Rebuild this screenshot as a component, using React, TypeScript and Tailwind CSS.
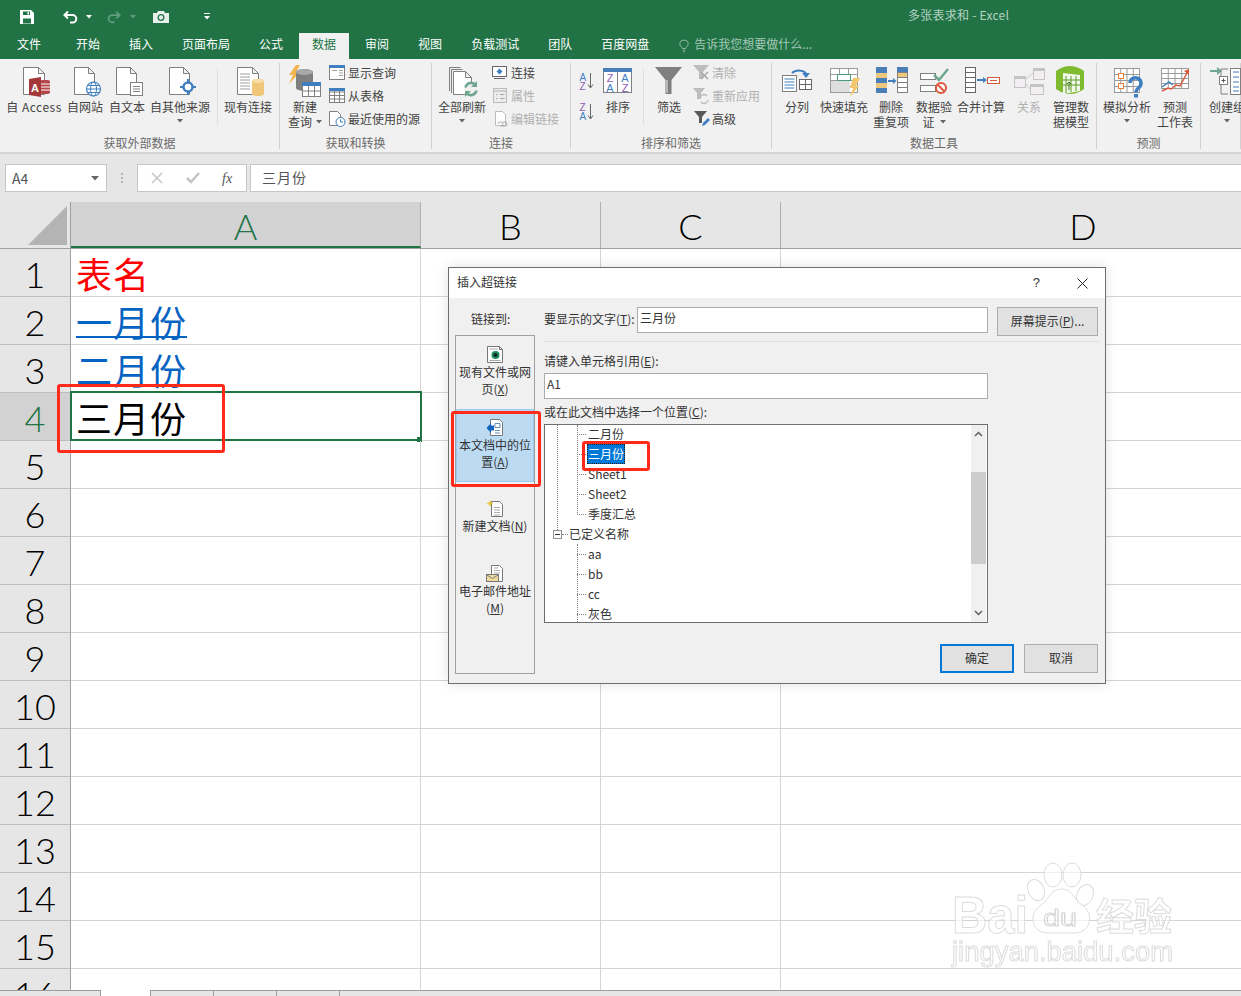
import React from "react";

const G = "#7f7f7f";
const BLUE = "#3f7fbf";
const GREEN = "#6fa68f";

function Table({ x, y, w, h, cols, rows, stroke = G, fill = "#fff" }: { x: number; y: number; w: number; h: number; cols: number; rows: number; stroke?: string; fill?: string }) {
  let d = "";
  for (let i = 1; i < cols; i++) d += `M${x + (w * i) / cols} ${y}v${h}`;
  for (let i = 1; i < rows; i++) d += `M${x} ${y + (h * i) / rows}h${w}`;
  return (
    <g>
      <rect x={x} y={y} width={w} height={h} fill={fill} stroke={stroke} />
      <path d={d} stroke={stroke} fill="none" />
    </g>
  );
}

function Doc({ x, y = 67.5, w = 20, h = 27, stroke = G }: { x: number; y?: number; w?: number; h?: number; stroke?: string }) {
  return <path d={`M${x} ${y}h${w - 6}l6 6v${h - 6}h-${w}zM${x + w - 6} ${y}v6h6`} fill="#fff" stroke={stroke} />;
}

function Caret({ className = "" }: { className?: string }) {
  return (
    <svg className={className} width="6" height="4" viewBox="0 0 6 4">
      <path d="M0 0h6L3 3.5z" fill="#666" />
    </svg>
  );
}

function Big({ w, lines, caret, dim, children }: { w: string; lines: React.ReactNode[]; caret?: boolean; dim?: boolean; children: React.ReactNode }) {
  return (
    <div className={`${w} shrink-0 flex flex-col items-center pt-[2px] leading-[15px] ${dim ? "text-[#b0b0b0]" : "text-[#444]"}`}>
      <div className="w-full h-[35px] -mb-px">{children}</div>
      {lines.map((l, i) => (
        <div key={i} className="whitespace-nowrap flex items-center">{l}</div>
      ))}
      {caret && <Caret className="mt-[5px]" />}
    </div>
  );
}

function Small({ label, dim, children }: { label: string; dim?: boolean; children: React.ReactNode }) {
  return (
    <div className={`h-[23px] flex items-center whitespace-nowrap ${dim ? "text-[#b0b0b0]" : "text-[#444]"}`}>
      <svg className="shrink-0" width="19" height="23" viewBox="0 0 19 23">{children}</svg>
      <span>{label}</span>
    </div>
  );
}

function Group({ w, label, children }: { w: string; label?: string; children: React.ReactNode }) {
  return (
    <div className={`${w} shrink-0 h-[86px] border-r border-[#d0d0d0] flex flex-col`}>
      <div className="h-[72px] flex">{children}</div>
      <div className="h-[14px] leading-[16px] text-center text-[#6a6a6a] whitespace-nowrap">{label}</div>
    </div>
  );
}

function Sep() {
  return <div className="w-px h-[55px] mt-[6px] bg-[#dcdcdc] shrink-0" />;
}

const SvgBig = ({ vb, children }: { vb: string; children: React.ReactNode }) => (
  <svg className="block w-full h-[35px] overflow-visible" viewBox={vb}>{children}</svg>
);

function TitleBar() {
  return (
    <div className="h-[33px] bg-[#217346] flex items-center relative">
      <svg className="ml-[20px]" width="14" height="14" viewBox="0 0 14 14">
        <path d="M0 0h11l3 3v11H0z" fill="#fff" />
        <path d="M3 1.5h7v3.5H3zM3 8.5h8v5H3z" fill="#217346" />
        <path d="M7.5 2h1.5v2.5H7.5z" fill="#fff" />
      </svg>
      <svg className="ml-[29px]" width="15" height="14" viewBox="0 0 15 14" fill="none" stroke="#fff" strokeWidth="2">
        <path d="M5 1.5L1.5 5 5 8.5M2 5h7.5a3.8 3.8 0 0 1 0 7.6H7" />
      </svg>
      <svg className="ml-[8px]" width="6" height="4" viewBox="0 0 6 4"><path d="M0 0h6L3 3.5z" fill="#fff" /></svg>
      <svg className="ml-[15px]" width="14" height="14" viewBox="0 0 15 14" fill="none" stroke="#5f9c7f" strokeWidth="2">
        <path d="M10 1.5L13.5 5 10 8.5M13 5H5.5a3.8 3.8 0 0 0 0 7.6H8" />
      </svg>
      <svg className="ml-[9px]" width="6" height="4" viewBox="0 0 6 4"><path d="M0 0h6L3 3.5z" fill="#5f9c7f" /></svg>
      <svg className="ml-[17px]" width="16" height="12" viewBox="0 0 16 12">
        <path d="M0 2h4l1-2h6l1 2h4v10H0z" fill="#e8f0ec" />
        <circle cx="8" cy="6.5" r="2.8" fill="none" stroke="#217346" strokeWidth="1.3" />
      </svg>
      <svg className="ml-[35px]" width="6" height="7" viewBox="0 0 6 7">
        <path d="M0 0h6v1H0zM0 3h6L3 6.5z" fill="#fff" />
      </svg>
      <div className="absolute left-[908px] top-[7px] leading-[15px] tracking-[0.25px] text-[#b5d2c3] whitespace-nowrap">多张表求和 - Excel</div>
    </div>
  );
}

function Tabs() {
  const names = ["开始", "插入", "页面布局", "公式"];
  const after = ["审阅", "视图", "负载测试", "团队", "百度网盘"];
  return (
    <div className="h-[26px] bg-[#217346] flex pl-[17px] gap-[29px] text-white leading-[22px] whitespace-nowrap">
      <div className="mr-[6px]">文件</div>
      {names.map((n) => <div key={n}>{n}</div>)}
      <div className="-mx-[13px] px-[13px] bg-[#f1f1f1] text-[#217346]">数据</div>
      {after.map((n) => <div key={n}>{n}</div>)}
      <div className="flex items-center h-[22px] -ml-[1px] text-[#a5c8b6]">
        <svg className="mr-[5px] mt-[3px] ml-[2px]" width="10" height="14" viewBox="0 0 12 15" fill="none" stroke="#a5c8b6" strokeWidth="1">
          <path d="M4 10.5C3.5 8.500 1 7.500 1 5a5 4.500 0 0 1 10 0c0 2.500-2.500 3.500-3 5.500zM4.500 12.500h3M5 14.500h2" />
        </svg>
        告诉我您想要做什么...
      </div>
    </div>
  );
}

function Ribbon() {
  return (
    <div className="h-[95px] bg-[#f1f1f1] border-b-2 border-[#d4d4d4] pt-[4px] flex overflow-hidden">
      <Group w="w-[280px]" label="获取外部数据">
        <div className="w-[3px] shrink-0" />
        <Big w="w-[62px]" lines={[<span className="tracking-[0.5px]">自 Access</span>]}>
          <SvgBig vb="3 65 62 35">
            <Doc x={23.5} w={21} h={27} />
            <rect x="40" y="80" width="10" height="14" rx="2" fill="#b5474a" />
            <path d="M41 84h9M41 87h9M41 90h9" stroke="#fff" />
            <path d="M29 79l12-2v20l-12-2z" fill="#a4373a" />
            <text x="31" y="92" fontSize="11" fontWeight="700" fill="#fff" fontFamily="Liberation Sans">A</text>
          </SvgBig>
        </Big>
        <Big w="w-[40px]" lines={["自网站"]}>
          <SvgBig vb="65 65 40 35">
            <Doc x={74.5} w={20} h={27} />
            <circle cx="93.500" cy="89" r="7" fill="#fff" stroke={BLUE} strokeWidth="1.2" />
            <ellipse cx="93.500" cy="89" rx="3" ry="7" fill="none" stroke={BLUE} />
            <path d="M86.500 89h14M87.500 85.500h12M87.500 92.500h12" stroke={BLUE} />
          </SvgBig>
        </Big>
        <Big w="w-[44px]" lines={["自文本"]}>
          <SvgBig vb="105 65 44 35">
            <Doc x={116.5} w={20} h={27} />
            <rect x="130.500" y="82.500" width="12" height="13" fill="#fff" stroke={G} />
            <path d="M133 86.500h7M133 89h7M133 91.500h7" stroke={G} />
          </SvgBig>
        </Big>
        <Big w="w-[62px]" lines={["自其他来源"]} caret>
          <SvgBig vb="149 65 62 35">
            <Doc x={169.5} w={20} h={27} />
            <circle cx="188" cy="87" r="4.500" fill="#fff" stroke={BLUE} strokeWidth="2.500" />
            <path d="M188 79v3M188 92v3M180 87h3M193 87h3" stroke={BLUE} strokeWidth="2" />
          </SvgBig>
        </Big>
        <div className="w-[6px] shrink-0" />
        <Sep />
        <div className="w-[4px] shrink-0" />
        <Big w="w-[52px]" lines={["现有连接"]}>
          <SvgBig vb="222 65 52 35">
            <Doc x={237.5} w={21} h={27} />
            <path d="M240 74h10M240 77h10M240 80h10M240 83h10M240 86h10M240 89h10" stroke="#a0a0a0" />
            <path d="M252 81a6 2 0 0 1 12 0v13a6 2 0 0 1-12 0z" fill="#f0c77a" />
            <ellipse cx="258" cy="81" rx="6" ry="2" fill="#f7dca6" />
          </SvgBig>
        </Big>
      </Group>

      <Group w="w-[152px]" label="获取和转换">
        <div className="w-[4px] shrink-0" />
        <Big w="w-[42px]" lines={["新建", <>查询<Caret className="ml-[4px]" /></>]}>
          <SvgBig vb="284 65 42 35">
            <path d="M296 65l-7 10h4l-4 9 11-12h-4l4-7z" fill="#f3b44f" />
            <path d="M296 72a8.500 3 0 0 1 17 0v16a8.500 3 0 0 1-17 0z" fill="#7f7f7f" />
            <ellipse cx="304.500" cy="72" rx="8.500" ry="3" fill="#a8a8a8" />
            <Table x={302.5} y={85.5} w={18} h={11} cols={3} rows={2} />
            <rect x="302" y="82" width="19" height="4" fill={BLUE} />
          </SvgBig>
        </Big>
        <div className="w-[3px] shrink-0" />
        <div className="-mt-[2px]">
          <Small label="显示查询">
            <rect x="0.500" y="4.500" width="15" height="14" fill="#fff" stroke={G} />
            <rect x="0" y="4" width="16" height="3" fill={BLUE} />
            <path d="M10 9.500h4M10 12h4M10 14.500h4M3 9.500h5" stroke="#a0a0a0" />
          </Small>
          <Small label="从表格">
            <Table x={0.5} y={4.5} w={15} h={14} cols={3} rows={4} />
            <rect x="0" y="4" width="16" height="3" fill={BLUE} />
          </Small>
          <Small label="最近使用的源">
            <path d="M0.500 4.500h8l3 3v11h-11z" fill="#fff" stroke={G} />
            <circle cx="11.500" cy="15" r="4.500" fill="#fff" stroke={BLUE} />
            <path d="M11.500 12.500V15h2.500" stroke={BLUE} fill="none" />
          </Small>
        </div>
      </Group>

      <Group w="w-[139px]" label="连接">
        <div className="w-[4px] shrink-0" />
        <Big w="w-[52px]" lines={["全部刷新"]} caret>
          <SvgBig vb="436 65 52 35">
            <path d="M449.500 91V67.500h11M451.500 93V69.500h11" fill="none" stroke={G} />
            <Doc x={453.5} y={71.5} w={18} h={23} />
            <circle cx="471" cy="89" r="7" fill="#f1f1f1" />
            <path d="M465.500 87.500a5.700 5.700 0 0 1 10-2.500M476.500 90.500a5.700 5.700 0 0 1-10 2.500" fill="none" stroke={GREEN} strokeWidth="2.500" />
            <path d="M477 81v6h-6zM465 97v-6h6z" fill={GREEN} />
          </SvgBig>
        </Big>
        <div className="w-[4px] shrink-0" />
        <div className="-mt-[2px]">
          <Small label="连接">
            <rect x="0.500" y="5.500" width="14" height="10" fill="#fff" stroke="#666" />
            <path d="M7.500 7.500l3 3-3 3-3-3z" fill={BLUE} />
            <path d="M2 17.500h11" stroke="#666" />
          </Small>
          <Small label="属性" dim>
            <rect x="1.500" y="4.500" width="13" height="14" fill="#ececec" stroke="#bbb" />
            <path d="M2 7h12" stroke="#ccc" strokeWidth="2" />
            <path d="M4 10.500h1.500M4 14.500h1.500M8 10.500h4.500M8 14.500h4.500" stroke="#aaa" />
          </Small>
          <Small label="编辑链接" dim>
            <path d="M3.500 4.500h7l3 3v11h-10z" fill="#fff" stroke="#bbb" />
            <path d="M6 17a2 2 0 0 1 2-2h1a2 2 0 0 1 0 4H8M10 19h3a2 2 0 0 0 0-4h-2" fill="none" stroke="#aaa" />
          </Small>
        </div>
      </Group>

      <Group w="w-[201px]" label="排序和筛选">
        <div className="w-[4px] shrink-0" />
        <svg className="shrink-0" width="25" height="72" viewBox="575 63 25 72" fontFamily="Liberation Sans" fontSize="10" fontWeight="400">
          <text x="579.500" y="81" fill={BLUE}>A</text>
          <text x="579.500" y="90" fill="#8e5bb5">Z</text>
          <path d="M590.500 73v14M588 84.500l2.500 3.500 2.500-3.500" fill="none" stroke="#666" />
          <text x="579.500" y="111" fill="#8e5bb5">Z</text>
          <text x="579.500" y="120" fill={BLUE}>A</text>
          <path d="M590.500 104v14M588 115.500l2.500 3.500 2.500-3.500" fill="none" stroke="#666" />
        </svg>
        <Big w="w-[36px]" lines={["排序"]}>
          <SvgBig vb="600 65 36 35">
            <rect x="603.500" y="68.500" width="28" height="24" fill="#fff" stroke={G} />
            <rect x="603" y="68" width="29" height="4" fill="#4a7eb8" />
            <path d="M617.500 72v20" stroke={G} />
            <g fontFamily="Liberation Sans" fontSize="11" textAnchor="middle">
              <text x="610" y="82" fill="#8e5bb5">Z</text>
              <text x="610" y="92" fill={BLUE}>A</text>
              <text x="625" y="82" fill={BLUE}>A</text>
              <text x="625" y="92" fill="#8e5bb5">Z</text>
            </g>
          </SvgBig>
        </Big>
        <div className="w-[7px] shrink-0" />
        <Sep />
        <div className="w-[7px] shrink-0" />
        <Big w="w-[36px]" lines={["筛选"]}>
          <SvgBig vb="651 65 36 35">
            <path d="M655 67h27l-10.500 13v14h-6V80z" fill="#7f7f7f" />
            <path d="M667 80v13" stroke="#c8c8c8" strokeWidth="1.500" />
          </SvgBig>
        </Big>
        <div className="w-[6px] shrink-0" />
        <div className="-mt-[2px]">
          <Small label="清除" dim>
            <path d="M0 4h16l-6 7v7H6v-7z" fill="#bdbdbd" />
            <path d="M8 11l7 7M15 11l-7 7" stroke="#a8a8a8" strokeWidth="1.500" />
          </Small>
          <Small label="重新应用" dim>
            <path d="M0 4h12l-4 5v6H4V9z" fill="#bdbdbd" />
            <path d="M7 14a4 4 0 0 1 7-2M15 16a4 4 0 0 1-7 2" fill="none" stroke="#bbb" strokeWidth="1.500" />
          </Small>
          <Small label="高级">
            <path d="M1 4h13l-5 6v6H6v-6z" fill="#595959" />
            <path d="M9 19l1-3 5-5 2 2-5 5z" fill={BLUE} />
          </Small>
        </div>
      </Group>

      <Group w="w-[325px]" label="数据工具">
        <div className="w-[3px] shrink-0" />
        <Big w="w-[44px]" lines={["分列"]}>
          <SvgBig vb="775 65 44 35">
            <rect x="782.500" y="75.500" width="14" height="16" fill="#fff" stroke={G} />
            <path d="M784.500 79h10M784.500 82h10M784.500 85h10M784.500 88h10" stroke={BLUE} />
            <Table x={799.5} y={79.5} w={12} h={10} cols={2} rows={2} stroke="#666" />
            <path d="M792 73a9 7 0 0 1 14 0" fill="none" stroke={BLUE} strokeWidth="2" />
            <path d="M802 73h8l-4 5z" fill={BLUE} />
          </SvgBig>
        </Big>
        <Big w="w-[50px]" lines={["快速填充"]}>
          <SvgBig vb="819 65 50 35">
            <Table x={830.5} y={68.5} w={27} h={24} cols={3} rows={4} stroke="#9a9a9a" />
            <rect x="831" y="81" width="19" height="11" fill="#dedede" />
            <rect x="837.500" y="74.500" width="13" height="6" fill="#fff" stroke="#4d9a7a" />
            <path d="M853 78h7l-4 8h3l-9 11 3-9h-3z" fill="#f3c66d" />
          </SvgBig>
        </Big>
        <Big w="w-[44px]" lines={["删除", "重复项"]}>
          <SvgBig vb="869 65 44 35">
            <rect x="876" y="67" width="11" height="26" fill="#4a7eb8" />
            <path d="M876 73h11v5h-11zM876 83h11v5h-11z" fill="#edc77c" />
            <path d="M888 81h6" stroke={BLUE} strokeWidth="2" />
            <path d="M893 78l3.500 3-3.500 3z" fill={BLUE} />
            <Table x={897.5} y={67.5} w={10} h={25} cols={1} rows={5} />
            <rect x="897" y="67" width="11" height="5" fill="#4a7eb8" />
            <rect x="898" y="73" width="9" height="4" fill="#edc77c" />
          </SvgBig>
        </Big>
        <Big w="w-[42px]" lines={["数据验", <>证<Caret className="ml-[5px]" /></>]}>
          <SvgBig vb="913 65 42 35">
            <rect x="920.500" y="73.500" width="15" height="6" fill="#fff" stroke={G} />
            <rect x="920.500" y="85.500" width="15" height="6" fill="#fff" stroke={G} />
            <path d="M934 75l5 5 9-11" fill="none" stroke={GREEN} strokeWidth="2.500" />
            <circle cx="941" cy="88" r="5" fill="#fff" stroke="#d9573b" strokeWidth="2" />
            <path d="M937.500 84.500l7 7" stroke="#d9573b" strokeWidth="2" />
          </SvgBig>
        </Big>
        <Big w="w-[52px]" lines={["合并计算"]}>
          <SvgBig vb="955 65 52 35">
            <Table x={965.5} y={67.5} w={10} h={25} cols={1} rows={5} stroke="#666" />
            <path d="M977 80h7" stroke={BLUE} strokeWidth="2" />
            <path d="M983 77l4 3-4 3z" fill={BLUE} />
            <rect x="987.500" y="77.500" width="12" height="6" fill="#fff" stroke="#d9573b" />
            <path d="M990 80.500h7" stroke="#d9573b" />
          </SvgBig>
        </Big>
        <Big w="w-[44px]" lines={["关系"]} dim>
          <SvgBig vb="1007 65 44 35">
            <path d="M1025 80l8-7M1025 83l5 6" stroke="#c8c8c8" />
            <rect x="1033.500" y="68.500" width="11" height="11" fill="#f2eef2" stroke="#c4c4c4" />
            <rect x="1033" y="68" width="12" height="3" fill="#c4c4c4" />
            <rect x="1014.500" y="76.500" width="11" height="11" fill="#f2eef2" stroke="#c4c4c4" />
            <rect x="1014" y="76" width="12" height="3" fill="#c4c4c4" />
            <rect x="1030.500" y="84.500" width="13" height="10" fill="#f2eef2" stroke="#c4c4c4" />
            <rect x="1030" y="84" width="14" height="3" fill="#c4c4c4" />
          </SvgBig>
        </Big>
        <Big w="w-[40px]" lines={["管理数", "据模型"]}>
          <SvgBig vb="1051 65 40 35">
            <path d="M1056 71q14-10 28 0v18q-14 10-28 0z" fill="#7fba2f" />
            <path d="M1063 73l17 2v16l-17 3z" fill="#fff" opacity="0.9" />
            <path d="M1066 76v17M1071 76v16M1076 76v15M1063 80h17M1063 85h17" stroke="#5d9a22" />
            <path d="M1069 90v-8M1067 84l2-2 2 2" stroke="#3f7a18" fill="none" />
          </SvgBig>
        </Big>
      </Group>

      <Group w="w-[104px]" label="预测">
        <div className="w-[4px] shrink-0" />
        <Big w="w-[52px]" lines={["模拟分析"]} caret>
          <SvgBig vb="1101 65 52 35">
            <Table x={1114.5} y={68.5} w={25} h={24} cols={4} rows={4} stroke="#9a9a9a" />
            <rect x="1118.500" y="73.500" width="5" height="5" fill="#fff" stroke="#ed7d31" />
            <rect x="1118.500" y="83.500" width="5" height="5" fill="#fff" stroke="#ed7d31" />
            <path d="M1130 83a5.500 5.500 0 1 1 9 4.500c-2.500 2-3 3-3 5" fill="none" stroke={BLUE} strokeWidth="3.500" />
            <rect x="1134" y="94" width="4" height="3.500" fill={BLUE} />
          </SvgBig>
        </Big>
        <Big w="w-[44px]" lines={["预测", "工作表"]}>
          <SvgBig vb="1153 65 44 35">
            <Table x={1161.5} y={68.5} w={27} h={20} cols={4} rows={4} stroke="#9a9a9a" />
            <path d="M1162 91l6-3 3 1 5-4 4 1 7-13" fill="none" stroke="#d9573b" strokeWidth="1.500" />
            <path d="M1184 71l5-2v6z" fill="#d9573b" />
            <path d="M1162 87l7-5 4 3" fill="none" stroke={BLUE} strokeWidth="1.500" />
          </SvgBig>
        </Big>
      </Group>

      <Group w="w-[40px]">
        <Big w="w-[52px]" lines={["创建组"]} caret>
          <SvgBig vb="1201 65 52 35">
            <path d="M1210 71h9" stroke={GREEN} strokeWidth="2" />
            <path d="M1217 67l5 4-5 4z" fill={GREEN} />
            <path d="M1228 69h-7v25h7" fill="none" stroke={G} />
            <rect x="1219.500" y="76.500" width="8" height="8" fill="#fff" stroke={G} />
            <path d="M1221.500 80.500h4M1223.500 78.500v4" stroke="#555" />
            <rect x="1230.500" y="68.500" width="10" height="26" fill="#fff" stroke={G} />
            <path d="M1233 72h6M1233 77h6M1233 82h6M1233 87h6M1233 91h6" stroke={BLUE} />
          </SvgBig>
        </Big>
      </Group>
    </div>
  );
}

function FormulaBar() {
  return (
    <div className="h-[48px] bg-[#e6e6e6] flex pt-[10px] pl-[5px]">
      <div className="w-[102px] h-[28px] bg-white border border-[#c6c6c6] flex items-center justify-between pl-[6px] pr-[7px] text-[14px] text-[#555]">
        A4
        <svg width="8" height="5" viewBox="0 0 8 5"><path d="M0 0h8L4 4.500z" fill="#666" /></svg>
      </div>
      <div className="w-[30px] h-[28px] flex flex-col items-center justify-center gap-[2px] shrink-0">
        <i className="block w-[2px] h-[2px] bg-[#b5b5b5]" />
        <i className="block w-[2px] h-[2px] bg-[#b5b5b5]" />
        <i className="block w-[2px] h-[2px] bg-[#b5b5b5]" />
      </div>
      <div className="w-[110px] h-[28px] bg-white border border-[#c6c6c6] flex items-center shrink-0">
        <svg className="ml-[13px]" width="12" height="12" viewBox="0 0 12 12"><path d="M1 1l10 10M11 1L1 11" stroke="#c4c4c4" strokeWidth="1.500" /></svg>
        <svg className="ml-[23px]" width="14" height="12" viewBox="0 0 14 12"><path d="M1 6l4 4 8-9" fill="none" stroke="#c4c4c4" strokeWidth="2.500" /></svg>
        <span className="ml-[22px] text-[#555] text-[14px] italic font-['Liberation_Serif',serif]">fx</span>
      </div>
      <div className="ml-[3px] flex-1 h-[28px] bg-white border border-[#c6c6c6] border-r-0 flex items-center pl-[11px] pb-[2px] text-[14px] tracking-[1px] text-[#555]">三月份</div>
    </div>
  );
}

const LAT = "font-['Lato','Liberation_Sans',sans-serif] font-light text-[36px] leading-none";

function Sheet() {
  const rows = Array.from({ length: 16 }, (_, i) => i + 1);
  return (
    <div className="h-[788px] overflow-hidden">
      <div className="h-[47px] flex bg-[#e6e6e6] border-b border-[#a0a0a0] text-black">
        <div className="w-[71px] shrink-0 border-r border-[#a0a0a0] relative">
          <svg className="absolute left-[27px] top-[3px]" width="41" height="41" viewBox="0 0 41 41"><path d="M1 40L40 1v39z" fill="#b4b4b4" /></svg>
        </div>
        <div className={`w-[350px] shrink-0 bg-[#d2d2d2] border-r border-[#b0b0b0] border-b-2 border-b-[#217346] text-[#217346] text-center pt-[6px] ${LAT}`}>A</div>
        <div className={`w-[180px] shrink-0 border-r border-[#b0b0b0] text-center pt-[6px] ${LAT}`}>B</div>
        <div className={`w-[180px] shrink-0 border-r border-[#b0b0b0] text-center pt-[6px] ${LAT}`}>C</div>
        <div className={`w-[604px] shrink-0 text-center pt-[6px] ${LAT}`}>D</div>
      </div>
      {rows.map((r) => (
        <div key={r} className="h-[48px] flex">
          <div className={`w-[71px] shrink-0 border-r border-b border-r-[#a0a0a0] border-b-[#bdbdbd] text-center pt-[7px] ${LAT} ${r === 4 ? "bg-[#d2d2d2] text-[#217346]" : "bg-[#e6e6e6] text-black"}`}>{r}</div>
          <div className="w-[350px] shrink-0 relative border-r border-b border-[#d4d4d4] flex items-center pl-[5px] text-[36px] leading-none tracking-[1px] whitespace-nowrap">
            {r === 1 && <span className="text-[#ff0000]">表名</span>}
            {r === 2 && <span className="text-[#0563c1] underline decoration-2 underline-offset-[-1px]">一月份</span>}
            {r === 3 && <span className="text-[#0563c1] underline decoration-2 underline-offset-[-1px]">二月份</span>}
            {r === 4 && <span className="text-black">三月份</span>}
            {r === 4 && (
              <div className="absolute -left-[1px] -top-[2px] w-[352px] h-[50px] border-2 border-[#217346]">
                <div className="absolute -right-[2px] -bottom-[3px] w-[5px] h-[5px] bg-[#217346]" />
              </div>
            )}
          </div>
          <div className="w-[180px] shrink-0 border-r border-b border-[#d4d4d4]" />
          <div className="w-[180px] shrink-0 border-r border-b border-[#d4d4d4]" />
          <div className="flex-1 border-b border-[#d4d4d4]" />
        </div>
      ))}
    </div>
  );
}

function SheetTabs() {
  return (
    <div className="h-[6px] flex">
      <div className="w-[101px] bg-[#e6e6e6] border-t border-r border-[#9c9c9c]" />
      <div className="w-[49px] bg-white" />
      <div className="flex-1 bg-[#e6e6e6] border-t border-l border-[#9c9c9c] flex">
        <div className="w-[63px] border-r border-[#9c9c9c]" />
        <div className="w-[63px] border-r border-[#9c9c9c]" />
        <div className="w-[63px] border-r border-[#9c9c9c]" />
      </div>
    </div>
  );
}

function DlgItem({ lines, selected, children }: { lines: React.ReactNode[]; selected?: boolean; children: React.ReactNode }) {
  return (
    <div className={`h-[73px] flex flex-col items-center justify-center pb-[2px] leading-[17px] text-[#333] border ${selected ? "bg-[#bcdbf3] border-[#99c9ef]" : "border-transparent"}`}>
      <svg width="18" height="17" viewBox="0 0 18 17" className="-mt-px">{children}</svg>
      {lines.map((l, i) => <div key={i} className="whitespace-nowrap">{l}</div>)}
    </div>
  );
}

function TreeRow({ children, selected }: { children: React.ReactNode; selected?: boolean }) {
  return (
    <div className="h-[20px] flex items-center pl-[32px] text-[#333]">
      <div className="w-[9px] border-t border-dotted border-[#808080]" />
      {selected ? (
        <span className="ml-px px-px h-[20px] leading-[20px] bg-[#0078d7] text-white outline outline-dotted outline-1 -outline-offset-1 outline-[#222]">{children}</span>
      ) : (
        <span className="ml-[2px]">{children}</span>
      )}
    </div>
  );
}

function Dialog() {
  return (
    <div className="absolute left-[448px] top-[267px] w-[658px] h-[417px] bg-[#f0f0f0] border border-[#6d6d6d] shadow-[0_0_12px_rgba(0,0,0,0.12)] text-[#333] flex flex-col">
      <div className="h-[30px] bg-white flex items-center pl-[8px] shrink-0">
        <span className="pb-[2px]">插入超链接</span>
        <span className="ml-auto font-['Liberation_Sans',sans-serif] text-[13px] pb-[1px]">?</span>
        <svg className="ml-[37px] mr-[17px]" width="11" height="11" viewBox="0 0 11 11"><path d="M0.500 0.500l10 10M10.500 0.500l-10 10" stroke="#222" /></svg>
      </div>
      <div className="flex pl-[6px]">
        <div className="w-[80px] shrink-0">
          <div className="mt-[12px] mb-[8px] pl-[16px] leading-[17px]">链接到:</div>
          <div className="h-[339px] border border-[#a0a0a0]">
            <DlgItem lines={["现有文件或网", <>页(<u>X</u>)</>]}>
              <path d="M1.500 0.500h12l3 3v13h-15z" fill="#fff" stroke="#777" />
              <path d="M13.500 0.500v3h3" fill="none" stroke="#777" />
              <path d="M3.500 3h8M3.500 14.500h11" stroke="#aaa" />
              <circle cx="9.500" cy="9" r="4" fill="#1e8f5a" />
              <circle cx="9.500" cy="9" r="2" fill="#123" />
            </DlgItem>
            <DlgItem selected lines={["本文档中的位", <>置(<u>A</u>)</>]}>
              <path d="M4.500 0.500h9l3 3v13h-12z" fill="#fff" stroke="#777" />
              <path d="M9 4.500h5v4H9zM9 11.500h5M9 14h5" stroke="#6a8fb5" fill="none" />
              <path d="M5 4L0.500 9 5 14v-2.500h3v-5H5z" fill="#1565c0" />
            </DlgItem>
            <DlgItem lines={[<>新建文档(<u>N</u>)</>]}>
              <path d="M5.500 1.500h8l3 3v12h-11z" fill="#fff" stroke="#777" />
              <path d="M8 7.500h6M8 10h6M8 12.500h6M8 15h6" stroke="#aaa" />
              <path d="M4 0l1 2.500L7.500 3.500 5 4.500 4 7 3 4.500 0.500 3.500 3 2.500z" fill="#e8c53a" />
            </DlgItem>
            <DlgItem lines={["电子邮件地址", <>(<u>M</u>)</>]}>
              <path d="M5.500 0.500h8l3 3v13h-11z" fill="#fff" stroke="#777" />
              <path d="M8 3h4M8 5.500h6M8 8h6" stroke="#aaa" />
              <rect x="0.500" y="9.500" width="12" height="7" fill="#f0dc9a" stroke="#777" />
              <path d="M1 10l5.500 3.500L12 10" fill="none" stroke="#777" />
            </DlgItem>
          </div>
        </div>
        <div className="ml-[9px] w-[555px] shrink-0 pt-[9px]">
          <div className="flex h-[29px]">
            <div className="w-[93px] leading-[24px] whitespace-nowrap">要显示的文字(<u>T</u>):</div>
            <div className="w-[351px] h-[26px] bg-white border border-[#ababab] pl-[2px] leading-[20px]">三月份</div>
            <div className="ml-[9px] w-[101px] h-[29px] pb-[2px] bg-[#e1e1e1] border border-[#adadad] flex items-center justify-center">屏幕提示(<u>P</u>)...</div>
          </div>
          <div className="mt-[5px] h-px bg-[#dfdfdf]" />
          <div className="mt-[10px] leading-[17px]">请键入单元格引用(<u>E</u>):</div>
          <div className="mt-[4px] w-[444px] h-[26px] bg-white border border-[#ababab] pl-[2px] leading-[20px]">A1</div>
          <div className="mt-[4px] leading-[17px]">或在此文档中选择一个位置(<u>C</u>):</div>
          <div className="mt-[4px] w-[444px] h-[199px] bg-white border border-[#6e6e6e] relative overflow-hidden">
            <div className="-mt-px">
              <TreeRow>二月份</TreeRow>
              <TreeRow selected>三月份</TreeRow>
              <TreeRow>Sheet1</TreeRow>
              <TreeRow>Sheet2</TreeRow>
              <TreeRow>季度汇总</TreeRow>
              <div className="h-[20px] flex items-center pl-[8px] text-[#333]">
                <div className="w-[9px] h-[9px] border border-[#919191] bg-white flex items-center justify-center"><i className="block w-[5px] h-px bg-[#333]" /></div>
                <div className="w-[6px] border-t border-dotted border-[#808080]" />
                <span className="ml-px">已定义名称</span>
              </div>
              <TreeRow>aa</TreeRow>
              <TreeRow>bb</TreeRow>
              <TreeRow>cc</TreeRow>
              <TreeRow>灰色</TreeRow>
            </div>
            <div className="absolute left-[12px] top-0 h-[105px] border-l border-dotted border-[#808080]" />
            <div className="absolute left-[32px] top-0 h-[90px] border-l border-dotted border-[#808080]" />
            <div className="absolute left-[32px] top-[119px] h-[80px] border-l border-dotted border-[#808080]" />
            <div className="absolute right-px top-0 bottom-0 w-[15px] bg-[#f0f0f0] flex flex-col items-center justify-between py-[6px]">
              <svg width="9" height="6" viewBox="0 0 9 6"><path d="M1 5l3.500-3.500L8 5" fill="none" stroke="#606060" strokeWidth="1.500" /></svg>
              <svg width="9" height="6" viewBox="0 0 9 6"><path d="M1 1l3.500 3.500L8 1" fill="none" stroke="#606060" strokeWidth="1.500" /></svg>
              <div className="absolute left-0 right-0 top-[47px] h-[92px] bg-[#cdcdcd]" />
            </div>
          </div>
          <div className="mt-[21px] w-[554px] flex justify-end gap-[10px]">
            <div className="w-[74px] h-[29px] pb-[2px] bg-[#e1e1e1] border-2 border-[#0078d7] flex items-center justify-center">确定</div>
            <div className="w-[74px] h-[29px] pb-[2px] bg-[#e1e1e1] border border-[#adadad] flex items-center justify-center">取消</div>
          </div>
        </div>
      </div>
    </div>
  );
}

function Watermark() {
  const s = { fill: "#fff", fillOpacity: 0.65, stroke: "#dcdcdc", strokeWidth: 1 };
  return (
    <svg className="absolute left-[945px] top-[860px] pointer-events-none blur-[0.3px]" width="235" height="112" viewBox="945 860 235 112">
      <text x="952" y="933" fontSize="52" fontWeight="700" fontFamily="Liberation Sans" textLength="76" lengthAdjust="spacingAndGlyphs" {...s}>Bai</text>
      <ellipse cx="1036" cy="890" rx="8" ry="11" transform="rotate(-25 1036 890)" {...s} />
      <ellipse cx="1053" cy="875" rx="9" ry="12" {...s} />
      <ellipse cx="1072" cy="875" rx="9" ry="12" {...s} />
      <ellipse cx="1085" cy="895" rx="8" ry="11" transform="rotate(25 1085 895)" {...s} />
      <path d="M1062 889c10 0 12 10 19 15 7 5 10 11 8 19-2 7-8 10-15 10h-25c-9 0-15-4-16-12-1-8 3-12 9-17 7-5 9-15 20-15z" {...s} />
      <text x="1043" y="926" fontSize="24" fontFamily="Liberation Sans" textLength="34" lengthAdjust="spacingAndGlyphs" fill="none" stroke="#d4d4d4" strokeWidth="1">du</text>
      <text x="1096" y="930" fontSize="38" fontWeight="700" fontFamily="Noto Sans CJK SC" textLength="76" lengthAdjust="spacingAndGlyphs" {...s}>经验</text>
      <text x="952" y="961" fontSize="27" fontFamily="Liberation Sans" textLength="221" lengthAdjust="spacingAndGlyphs" {...s}>jingyan.baidu.com</text>
    </svg>
  );
}

export default function App() {
  return (
    <div className="relative w-[1241px] h-[996px] overflow-hidden bg-white text-[12px] font-['Noto_Sans_CJK_SC','Noto_Sans',sans-serif]">
      <TitleBar />
      <Tabs />
      <Ribbon />
      <FormulaBar />
      <Sheet />
      <SheetTabs />
      <Watermark />
      <Dialog />
      <div className="absolute left-[57px] top-[384px] w-[168px] h-[69px] border-[3px] border-[#ff2a1a] rounded-[3px]" />
      <div className="absolute left-[451px] top-[411px] w-[90px] h-[76px] border-[3px] border-[#ff2a1a] rounded-[3px]" />
      <div className="absolute left-[582px] top-[441px] w-[68px] h-[30px] border-[3px] border-[#ff2a1a] rounded-[3px]" />
    </div>
  );
}
